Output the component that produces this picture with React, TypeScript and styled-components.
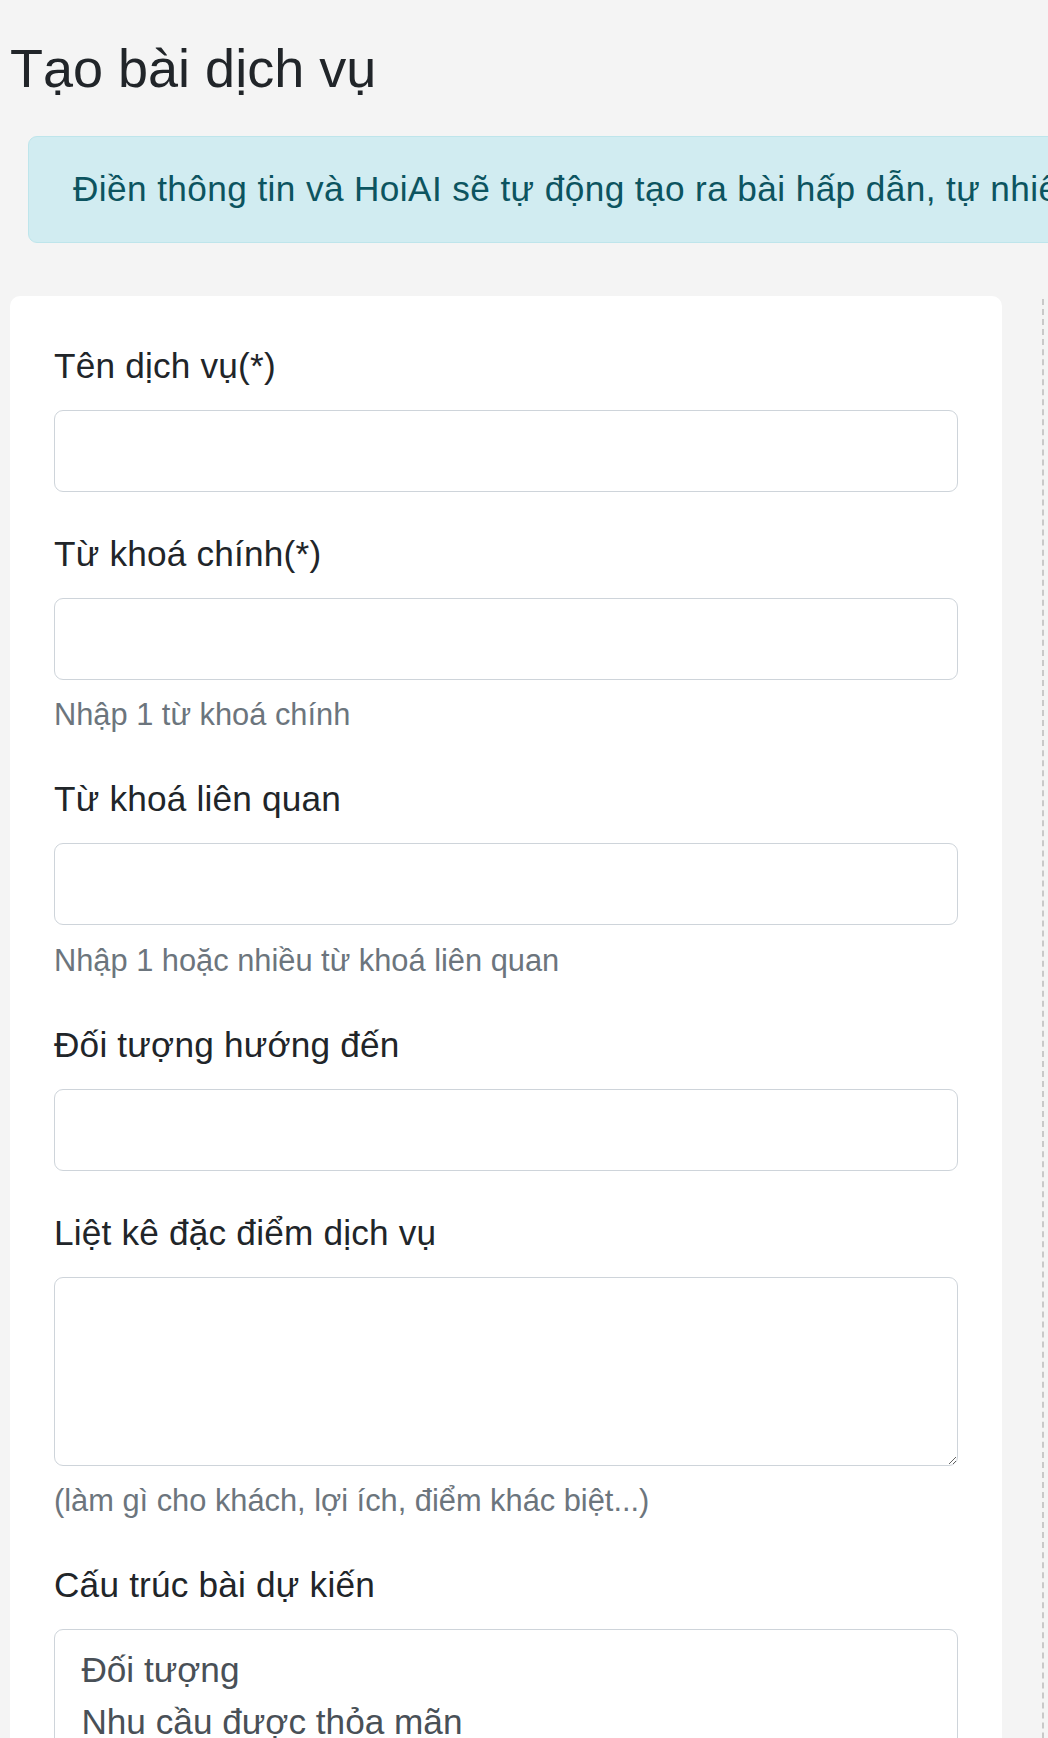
import styled, { createGlobalStyle } from 'styled-components';

const GlobalStyle = createGlobalStyle`
  html, body {
    margin: 0;
    padding: 0;
    background-color: #f4f4f4;
    overflow: hidden;
  }
  body {
    font-family: "Liberation Sans", Arial, sans-serif;
    color: #212529;
  }
  * {
    box-sizing: border-box;
  }
`;

const Page = styled.div`
  width: 1700px;
  padding: 36px 0 0 10px;
`;

const Title = styled.h1`
  margin: 0 0 35px 0;
  font-size: 54px;
  font-weight: 400;
  line-height: 1.2;
  color: #212529;
`;

const Alert = styled.div`
  margin: 0 0 53px 18px;
  padding: 26px 44px;
  background-color: #d1ecf1;
  border: 1px solid #bee5eb;
  border-radius: 9px;
  color: #0c5460;
  font-size: 35.2px;
  line-height: 1.5;
  letter-spacing: 0.4px;
  white-space: nowrap;
`;

const ContentRow = styled.div`
  display: flex;
  align-items: flex-start;
`;

const FormCard = styled.div`
  width: 992px;
  flex-shrink: 0;
  background-color: #fff;
  border-radius: 10px;
  padding: 44px 44px 60px;
`;

const SidePanel = styled.div`
  margin: 3px 0 0 40px;
  width: 600px;
  height: 1600px;
  border-left: 2px dashed #c9c9c9;
`;

const FormGroup = styled.div`
  margin-bottom: 35.6px;
`;

const Label = styled.label`
  display: block;
  margin-bottom: 17.6px;
  font-size: 35.2px;
  line-height: 1.5;
  letter-spacing: 0.2px;
`;

const fieldStyle = `
  display: block;
  width: 100%;
  padding: 13.2px 26.4px;
  border: 1px solid #ced4da;
  border-radius: 9px;
  background-color: #fff;
  color: #495057;
  font-family: "Liberation Sans", Arial, sans-serif;
  font-size: 35.2px;
  line-height: 1.5;
  outline: none;
`;

const Input = styled.input`
  ${fieldStyle}
  height: 82px;
`;

const TextArea = styled.textarea<{ $height: number }>`
  ${fieldStyle}
  height: ${(p) => p.$height}px;
  resize: vertical;
`;

const Help = styled.small`
  display: block;
  margin-top: 13.5px;
  font-size: 30.8px;
  line-height: 44px;
  color: #6c757d;
`;

const App = () => {
    return (
        <Page>
            <GlobalStyle />
            <Title>Tạo bài dịch vụ</Title>
            <Alert>Điền thông tin và HoiAI sẽ tự động tạo ra bài hấp dẫn, tự nhiên, chuẩn SEO cho dịch vụ của bạn</Alert>
            <ContentRow>
                <FormCard>
                    <FormGroup>
                        <Label>Tên dịch vụ(*)</Label>
                        <Input type="text" />
                    </FormGroup>
                    <FormGroup>
                        <Label>Từ khoá chính(*)</Label>
                        <Input type="text" />
                        <Help>Nhập 1 từ khoá chính</Help>
                    </FormGroup>
                    <FormGroup>
                        <Label>Từ khoá liên quan</Label>
                        <Input type="text" />
                        <Help>Nhập 1 hoặc nhiều từ khoá liên quan</Help>
                    </FormGroup>
                    <FormGroup>
                        <Label>Đối tượng hướng đến</Label>
                        <Input type="text" />
                    </FormGroup>
                    <FormGroup>
                        <Label>Liệt kê đặc điểm dịch vụ</Label>
                        <TextArea $height={189} />
                        <Help>(làm gì cho khách, lợi ích, điểm khác biệt...)</Help>
                    </FormGroup>
                    <FormGroup>
                        <Label>Cấu trúc bài dự kiến</Label>
                        <TextArea
                            $height={400}
                            defaultValue={'Đối tượng\nNhu cầu được thỏa mãn\nĐặc điểm dịch vụ\nLợi ích\nKêu gọi hành động'}
                        />
                    </FormGroup>
                </FormCard>
                <SidePanel />
            </ContentRow>
        </Page>
    );
};

export default App;
